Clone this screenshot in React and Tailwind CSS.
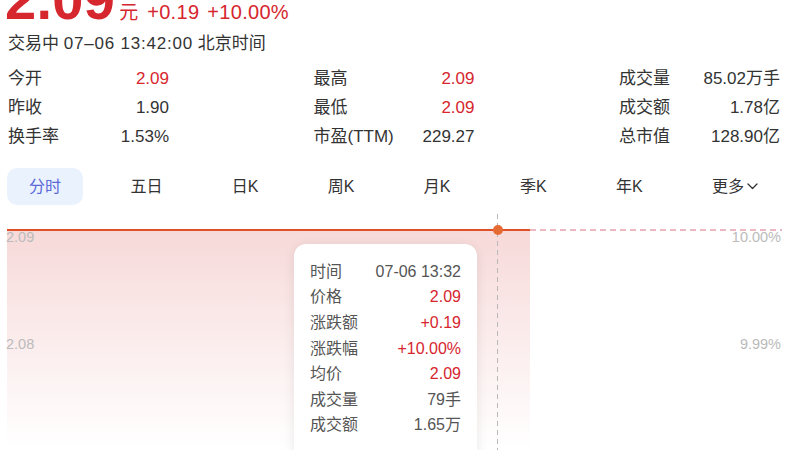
import React from "react";

const RED = "text-[#d6262e]";

function StatCol({ rows }) {
  return (
    <div className="flex w-[161px] flex-col">
      {rows.map(([k, v, red]) => (
        <div key={k} className="flex h-[29px] items-center justify-between">
          <span className="text-[#333]">{k}</span>
          <span className={red ? RED : "text-[#333]"}>{v}</span>
        </div>
      ))}
    </div>
  );
}

const tabs = ["分时", "五日", "日K", "周K", "月K", "季K", "年K"];

const tip = [
  ["时间", "07-06 13:32", false],
  ["价格", "2.09", true],
  ["涨跌额", "+0.19", true],
  ["涨跌幅", "+10.00%", true],
  ["均价", "2.09", true],
  ["成交量", "79手", false],
  ["成交额", "1.65万", false],
];

export default function App() {
  return (
    <div className="relative h-[450px] w-[800px] overflow-hidden bg-white font-['Liberation_Sans','Noto_Sans_CJK_SC',sans-serif] text-[16px]">
      {/* price */}
      <div className={`-mt-[28px] flex items-baseline pl-[5px] ${RED}`}>
        <span className="text-[56px] font-bold leading-none tracking-[0.3px]">2.09</span>
        <span className="ml-[4px] text-[19px] leading-none">元</span>
        <span className="ml-[9px] text-[20px] leading-none tracking-[0.3px]">+0.19</span>
        <span className="ml-[8px] text-[20px] leading-none tracking-[0.3px]">+10.00%</span>
      </div>
      <div className="mt-[6px] pl-[8px] text-[17px] leading-[20px] text-[#333]">
        交易中 <span className="tracking-[0.8px]">07–06 13:42:00</span> 北京时间
      </div>

      {/* stats */}
      <div className="mt-[10px] flex justify-between pl-[8px] pr-[20px] text-[17px]">
        <StatCol rows={[["今开", "2.09", true], ["昨收", "1.90"], ["换手率", "1.53%"]]} />
        <StatCol rows={[["最高", "2.09", true], ["最低", "2.09", true], ["市盈(TTM)", "229.27"]]} />
        <StatCol rows={[["成交量", "85.02万手"], ["成交额", "1.78亿"], ["总市值", "128.90亿"]]} />
      </div>

      {/* tabs */}
      <div className="mt-[17px] flex justify-between pl-[7px] pr-[20px] text-[16px]">
        {tabs.map((t, i) => (
          <div
            key={t}
            className={
              i === 0
                ? "flex h-[37px] items-center rounded-[10px] bg-[#eaf2fe] px-[22px] text-[#5b6ad8]"
                : "flex h-[37px] items-center px-[22px] text-[#333]"
            }
          >
            {t}
          </div>
        ))}
        <div className="flex h-[37px] items-center gap-[3px] px-[22px] text-[#333]">
          更多
          <svg width="11" height="7" viewBox="0 0 11 7" fill="none">
            <path d="M1 1l4.5 4.5L10 1" stroke="#333" strokeWidth="1.3" strokeLinecap="round" strokeLinejoin="round" />
          </svg>
        </div>
      </div>

      {/* chart */}
      <div className="relative mt-[5px] h-[240px]">
        <svg className="absolute inset-0" width="800" height="240" viewBox="0 0 800 240">
          <defs>
            <linearGradient id="fillg" x1="0" y1="0" x2="0" y2="1">
              <stop offset="0" stopColor="#f7d9d9" />
              <stop offset="0.6" stopColor="#fcf0f0" />
              <stop offset="1" stopColor="#ffffff" />
            </linearGradient>
          </defs>
          <rect x="7" y="20" width="523" height="220" fill="url(#fillg)" />
          <line x1="497.5" y1="4" x2="497.5" y2="240" stroke="#b8b8b8" strokeWidth="1" strokeDasharray="5 4" />
          <line x1="530" y1="20" x2="782" y2="20" stroke="#e6a3ae" strokeWidth="1.3" strokeDasharray="6 4" />
          <line x1="7" y1="20" x2="530" y2="20" stroke="#df4f28" strokeWidth="2.2" />
          <circle cx="498" cy="20" r="5" fill="#e66a33" />
        </svg>
        <span className="absolute left-[6px] top-[20px] text-[14.5px] leading-[15px] text-[#bbbbbb]">2.09</span>
        <span className="absolute left-[6px] top-[127px] text-[14.5px] leading-[15px] text-[#bbbbbb]">2.08</span>
        <span className="absolute right-[19px] top-[20px] text-[14.5px] leading-[15px] text-[#bbbbbb]">10.00%</span>
        <span className="absolute right-[19px] top-[127px] text-[14.5px] leading-[15px] text-[#bbbbbb]">9.99%</span>

        {/* tooltip */}
        <div className="absolute left-[294px] top-[34px] h-[230px] w-[183px] rounded-[12px] bg-white px-[16px] pt-[15px] shadow-[0_2px_12px_rgba(0,0,0,0.09)]">
          {tip.map(([k, v, red]) => (
            <div key={k} className="flex h-[25.6px] items-center justify-between text-[16px]">
              <span className="text-[#555]">{k}</span>
              <span className={red ? RED : "text-[#555]"}>{v}</span>
            </div>
          ))}
        </div>
      </div>
    </div>
  );
}
